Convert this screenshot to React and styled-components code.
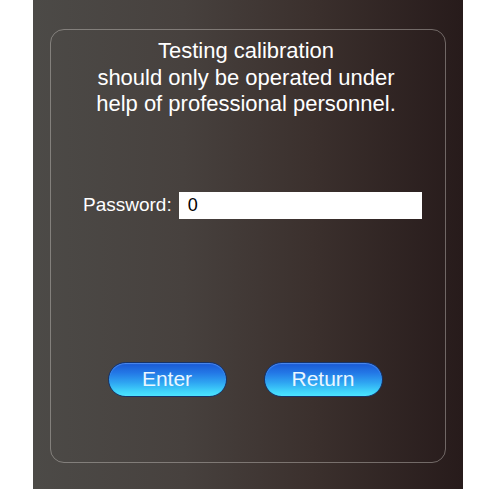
import React from 'react';
import styled, { createGlobalStyle } from 'styled-components';

const GlobalStyle = createGlobalStyle`
  html, body {
    margin: 0;
    padding: 0;
    background: #ffffff;
  }
  body {
    font-family: "Liberation Sans", Arial, sans-serif;
  }
`;

const Screen = styled.div`
  width: 430px;
  height: 489px;
  margin-left: 33px;
  padding: 29px 17px 0;
  box-sizing: border-box;
  background: linear-gradient(90deg, #4c4a47 0%, #47413e 35%, #3b302d 65%, #271b1b 100%);
`;

const Card = styled.div`
  height: 434px;
  box-sizing: border-box;
  border: 1px solid rgba(200, 195, 190, 0.45);
  border-radius: 14px;
  display: flex;
  flex-direction: column;
  align-items: center;
  padding-top: 8px;
`;

const Notice = styled.p`
  margin: 0 4px 0 0;
  color: #ffffff;
  font-size: 22px;
  line-height: 26.5px;
  text-align: center;
`;

const Row = styled.div`
  align-self: stretch;
  display: flex;
  align-items: center;
  gap: 7px;
  padding-left: 32px;
  margin-top: 74px;
`;

const Label = styled.span`
  color: #ffffff;
  font-size: 19px;
`;

const Field = styled.input`
  width: 243px;
  height: 27px;
  box-sizing: border-box;
  border: none;
  outline: none;
  padding: 0 9px;
  background: #ffffff;
  color: #000000;
  font-family: "Liberation Sans", Arial, sans-serif;
  font-size: 18px;
`;

const Actions = styled.div`
  display: flex;
  gap: 37px;
  margin-top: 143px;
  margin-left: -6px;
`;

const PillButton = styled.button`
  width: 119px;
  height: 35px;
  box-sizing: border-box;
  border-radius: 18px;
  border: 1.5px solid #15336a;
  background: linear-gradient(180deg, #1a58d4 0%, #2378e6 30%, #2fa6f2 60%, #3fd2fa 85%, #4ce4ff 100%);
  box-shadow: inset 0 1px 1px rgba(110, 170, 255, 0.6);
  color: #eaf6ff;
  font-family: "Liberation Sans", Arial, sans-serif;
  font-size: 21px;
  padding: 0;
  cursor: pointer;
`;

export default function App() {
  return (
    <>
      <GlobalStyle />
      <Screen>
        <Card>
          <Notice>
            Testing calibration
            <br />
            should only be operated under
            <br />
            help of professional personnel.
          </Notice>
          <Row>
            <Label>Password:</Label>
            <Field type="text" defaultValue="0" />
          </Row>
          <Actions>
            <PillButton>Enter</PillButton>
            <PillButton>Return</PillButton>
          </Actions>
        </Card>
      </Screen>
    </>
  );
}
